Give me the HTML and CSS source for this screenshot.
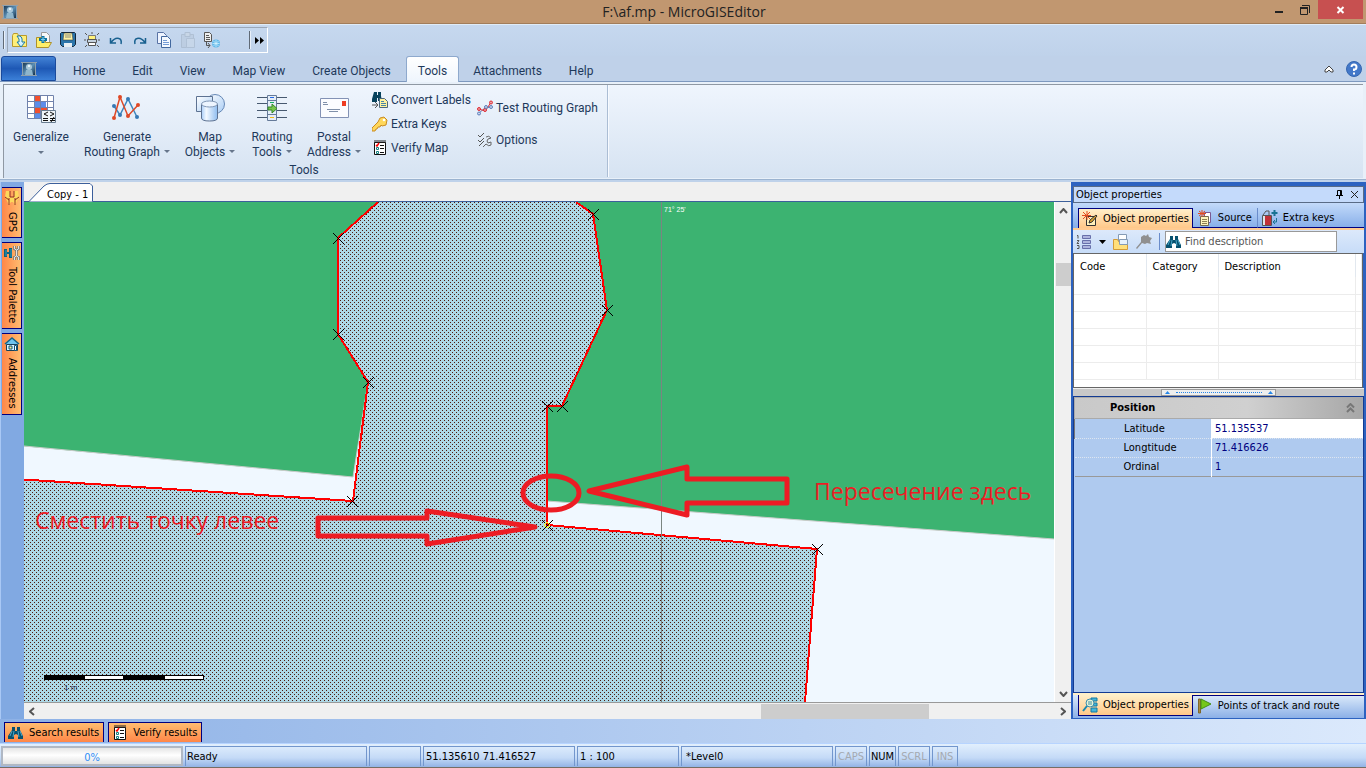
FILE: index.html
```html
<!DOCTYPE html>
<html lang="en">
<head>
<meta charset="utf-8">
<title>F:\af.mp - MicroGISEditor</title>
<link rel="stylesheet" href="styles.css">
</head>
<body>
<svg class="defs" aria-hidden="true">
  <defs>
    <linearGradient id="steel" x1="0" y1="0" x2="1" y2="1"><stop offset="0" stop-color="#1d3a55"/><stop offset=".5" stop-color="#5b8fb5"/><stop offset="1" stop-color="#16324c"/></linearGradient>
    <linearGradient id="glass" x1="0" y1="0" x2="1" y2="1"><stop offset="0" stop-color="#fff"/><stop offset="1" stop-color="#a9cdf5"/></linearGradient>
    <linearGradient id="cyl" x1="0" y1="0" x2="1" y2="0"><stop offset="0" stop-color="#a8cdf8"/><stop offset=".3" stop-color="#f4f9ff"/><stop offset="1" stop-color="#8fbdf0"/></linearGradient>
    <symbol id="app" viewBox="0 0 16 16"><path d="M0 1h16v1h-1v12h1v1H0v-1h1V2H0z" fill="#8ea0ae"/><path d="M2 2h12v12H2z" fill="url(#steel)"/><circle cx="8" cy="6" r="3" fill="#a9c8da"/><path d="M5 9h6l1 5H4z" fill="#8fb6cc"/><path d="M7 4h2v2H7z" fill="#e6f2f8"/></symbol>
    <symbol id="bino" viewBox="0 0 16 16"><path d="M4 2h3v4h2V2h3v3l3 6v3h-5v-4L8 9l-2 1v4H0v-3l4-6z" fill="#07516f"/><path d="M4 6l-2 5M6 6l-1 6M10 6l1 6M12 6l2 5" stroke="#4ba7c7" fill="none"/></symbol>
    <symbol id="check" viewBox="0 0 16 16"><path d="M2.500 2.500h11v12h-11z" fill="#fff" stroke="#111"/><path d="M3 0v3M5 0v3M7 0v3M9 0v3M11 0v3M13 0v3" stroke="#222"/><path d="M4 5l1 1 2-3" stroke="red" fill="none" stroke-width="1.500"/><path d="M4.500 7.500h2v2h-2zM4.500 11.500h2v2h-2z" fill="none" stroke="#168080"/><path d="M8 5.500h4M8 8.500h4M8 12.500h4" stroke="#111"/></symbol>
  </defs>
</svg>

<header class="titlebar">
  <svg class="i16"><use href="#app"/></svg>
  <h1 class="title">F:\af.mp - MicroGISEditor</h1>
  <div class="winbtns">
    <button class="winbtn" aria-label="Minimize"><svg width="12" height="12"><path d="M2 7h8v2H2z" fill="#222"/></svg></button>
    <button class="winbtn" aria-label="Restore"><svg width="12" height="12"><path d="M1.500 3.500h7v7h-7zM3 1.500h7.500V9" fill="none" stroke="#222"/><path d="M1 4h8" stroke="#222" stroke-width="2"/></svg></button>
    <button class="winbtn close" aria-label="Close"><svg width="12" height="12"><path d="M2.500 3l6 6M8.500 3l-6 6" stroke="#fff" stroke-width="2"/></svg></button>
  </div>
</header>

<div class="quick">
  <span class="grip"></span>
  <div class="quickbox">
    <button class="tool" aria-label="Open"><svg class="i16" viewBox="0 0 16 16"><path d="M.5 3.500l1-2h4l1 2h8v11H.5z" fill="#ffef7a" stroke="#b89a2c"/><path d="M5 4q6-1 5 6h3l-4 5-4-5h2q1-3-2-6z" fill="#d9f3ff" stroke="#1a7ca8"/></svg></button>
    <button class="tool" aria-label="Add map"><svg class="i16" viewBox="0 0 16 16"><path d="M5.500.5h5l3 3v8h-8z" fill="#f7f7f7" stroke="#999"/><path d="M.5 15.500v-10h5l1 2h3v3h6l-3 5z" fill="#ffef6a" stroke="#ad912d"/><path d="M7 4v7M3 7.500h8" stroke="#0a71a0" stroke-width="3"/><path d="M7 5v5M5 7.500h4" stroke="#7fd0ee"/></svg></button>
    <button class="tool" aria-label="Save"><svg class="i16" viewBox="0 0 16 16"><path d="M1.500.5h13l1 1v11l-2 2h-11l-2-2v-11z" fill="#2c75aa" stroke="#14283c"/><path d="M4 1h8l1 7H3z" fill="#fff4a4" stroke="#333" stroke-width=".5"/><path d="M5 3h6M5 5h6" stroke="#887"/><path d="M4 11h8v4H4z" fill="#e8eef3"/></svg></button>
    <button class="tool" aria-label="Print"><svg class="i16" viewBox="0 0 16 16"><path d="M1 1l2 2M15 1l-2 2M1 15l2-2M15 15l-2-2M8 0v2M0 8h2M14 8h2" stroke="#555"/><path d="M4.500 3.500h7v4h-7z" fill="#fff27a" stroke="#777"/><path d="M3.500 7.500h9v3h-9z" fill="#c5d2df" stroke="#555"/><path d="M4.500 10.500h7v3h-7z" fill="#fff" stroke="#555"/></svg></button>
    <button class="tool" aria-label="Undo"><svg class="i16" viewBox="0 0 16 16"><path d="M2.500 6v5H8M3 10.500Q7 5 11 6.500q3 1 2 5.500" fill="none" stroke="#18608f" stroke-width="1.500"/></svg></button>
    <button class="tool" aria-label="Redo"><svg class="i16" viewBox="0 0 16 16"><path d="M13.500 6v5H8M13 10.500Q9 5 5 6.500q-3 1-2 5.500" fill="none" stroke="#18608f" stroke-width="1.500"/></svg></button>
    <button class="tool" aria-label="Copy"><svg class="i16" viewBox="0 0 16 16"><path d="M1.500.5h6l3 3v8h-9z" fill="#eef4ff" stroke="#5973a5"/><path d="M5.500 4.500h6l3 3v8h-9z" fill="#f4f9ff" stroke="#42689f"/><path d="M7 8.500h4M7 10.500h6M7 12.500h6" stroke="#739bd5"/></svg></button>
    <button class="tool" disabled aria-label="Paste"><svg class="i16" viewBox="0 0 16 16"><path d="M1.500 2.500h12v13h-12z" fill="#b9c8da" stroke="#9cabbc"/><path d="M5 .5h5v4H5z" fill="#ccd6e1" stroke="#9cabbc"/><path d="M6.500 6.500h8v9h-8z" fill="#cbd8e7" stroke="#a0b0c2"/></svg></button>
    <button class="tool" aria-label="Transform"><svg class="i16" viewBox="0 0 16 16"><path d="M.5.500h5l2 2v7h-7z" fill="#eee" stroke="#555"/><path d="M2 3.500h3M2 5.500h4M2 7.500h4M2.500 10v3.500H6M4 11l2 2.500L4 16" stroke="#555" fill="none"/><circle cx="12" cy="11.500" r="4" fill="#64b9ea"/><path d="M12 8v7M8.500 11.500h7M9.500 9l5 5M14.500 9l-5 5" stroke="#d9f5ff" stroke-width=".7"/></svg></button>
    <span class="grip far"></span>
    <button class="more" aria-label="More commands"><svg width="9" height="7"><path d="M0 0l4 3.500L0 7zM5 0l4 3.500L5 7z"/></svg></button>
  </div>
</div>

<nav class="tabs">
  <button class="appbtn" aria-label="Application menu"><svg class="i16"><use href="#app"/></svg></button>
  <button class="tab">Home</button><button class="tab">Edit</button><button class="tab">View</button><button class="tab">Map View</button><button class="tab">Create Objects</button><button class="tab current">Tools</button><button class="tab">Attachments</button><button class="tab">Help</button>
  <div class="tabend">
    <button class="bare" aria-label="Collapse ribbon"><svg width="10" height="8"><path d="M1 5l4-4 4 4v2H7L5 5 3 7H1z" fill="#fff" stroke="#444"/></svg></button>
    <button class="bare" aria-label="Help"><svg width="16" height="16"><circle cx="8" cy="8" r="7.500" fill="#4378c9" stroke="#3566b0"/><path d="M5.500 6q0-2.500 2.500-2.500T10.500 6 8 8.500V10M8 11.500v2" fill="none" stroke="#fff" stroke-width="2"/></svg></button>
  </div>
</nav>

<section class="ribbon">
  <div class="group">
    <div class="groupbody">
      <button class="big b1"><svg width="32" height="32"><path d="M2 3h27v24H2z" fill="#fff"/><path d="M9 3h7v6H9zM9 15h7v6H9zM16 15h6v6h-6z" fill="#f1502f"/><path d="M9 9h12v6H9zM9 21h6v6H9z" fill="#5d8de9"/><path d="M2.500 3.500h26v23h-26zM9.500 3v24M15.500 3v24M22.500 3v24M2 9.500h27M2 15.500h27M2 21.500h27" fill="none" stroke="#7082ac"/><path d="M16.500 18.500h14v12h-14z" fill="#eef4f8" stroke="#687d91"/><path d="M23 20l-4 2 4 2M18 26.500h5M18 28.500h5M25 20l4 2-4 2M25 26.500h5M25 28.500h5M29 25l-3 5" fill="none" stroke="#111"/></svg><span>Generalize</span><span class="drop"></span></button>
      <button class="big b2"><svg width="32" height="32"><path d="M3 14l6 9 8-16 9 18" fill="none" stroke="#3f87be" stroke-width="1.500"/><path d="M3 26L9 5l8 19L27 13" fill="none" stroke="#df4826" stroke-width="1.500"/><g fill="#3779b5"><circle cx="3" cy="14" r="2"/><circle cx="9" cy="23" r="2"/><circle cx="17" cy="7" r="2"/><circle cx="26" cy="25" r="2"/></g><g fill="#df4826"><circle cx="3" cy="26" r="2"/><circle cx="9" cy="5" r="2"/><circle cx="17" cy="24" r="2"/><circle cx="27" cy="13" r="2"/></g></svg><span>Generate</span><span>Routing Graph <i class="drop"></i></span></button>
      <button class="big b3"><svg width="32" height="32"><circle cx="21" cy="12" r="9.500" fill="url(#glass)" stroke="#6688b6"/><path d="M2.500 4.500h16v15h-16z" fill="url(#glass)" stroke="#5d7292"/><path d="M7.500 12v14q0 3 8 3t8-3V12" fill="url(#cyl)" stroke="#5d7292"/><ellipse cx="15.500" cy="12" rx="8" ry="3" fill="#edf5ff" stroke="#8298b6"/></svg><span>Map</span><span>Objects <i class="drop"></i></span></button>
      <button class="big b4"><svg width="32" height="32"><path d="M1 5.500h30M1 11.500h30M1 18.500h30M1 25.500h30" stroke="#475970"/><path d="M11.500 3.500h9v25h-9z" fill="#e4edf8" stroke="#657a99"/><path d="M12 8.500h8M12 22.500h8" stroke="#657a99"/><path d="M14 5.500h4" stroke="#2669e7"/><path d="M14 10.500h4" stroke="#18ae69"/><path d="M14 25.500h4" stroke="#f0ba19"/><path d="M12 15h4v-3l5 4.500-5 4.500v-3h-4z" fill="#75c64b" stroke="#38852a"/></svg><span>Routing</span><span>Tools <i class="drop"></i></span></button>
      <button class="big b5"><svg width="32" height="32"><path d="M2.500 6.500h28v19h-28z" fill="#fbfcff" stroke="#8392b5"/><path d="M5 10.500h4M5 12.500h5M9 17.500h13M11 19.500h9" stroke="#8090aa"/><path d="M24 9h4v5h-4z" fill="#ee3c24"/></svg><span>Postal</span><span>Address <i class="drop"></i></span></button>
      <div class="stack first">
        <button class="small"><svg class="i16" viewBox="0 0 16 16"><path d="M2 0h3v3h1V0h3v4l1 5H6V6H5v4H0V7z" fill="#07425c"/><path d="M0 13h5M3 10l3 3-3 3" stroke="#555" fill="none"/><path d="M7.500 6.500h5l3 3v6h-8z" fill="#fff2a0" stroke="#4e687c"/><path d="M9 9.500h3M9 11.500h5M9 13.500h5" stroke="#4685a9"/></svg>Convert Labels</button>
        <button class="small"><svg class="i16" viewBox="0 0 16 16"><path d="M8 2l4-1 3 3-1 5-4 1-1-1-1 2H6l-1 2H4l-1 2H0v-3l6-6z" fill="#ffd75a" stroke="#c98c23"/><circle cx="12" cy="4" r="1.300" fill="#fff"/></svg>Extra Keys</button>
        <button class="small"><svg class="i16"><use href="#check"/></svg>Verify Map</button>
      </div>
      <div class="stack second">
        <button class="small"><svg class="i16" viewBox="0 0 16 16"><path d="M2 13l6-5 6-1" stroke="#6381b8" fill="none"/><path d="M2 9l6 2 3-4 3-5" stroke="#e02c35" fill="none"/><g fill="#e9a0a4" stroke="#e02c35"><circle cx="2" cy="9" r="1.500"/><circle cx="8" cy="10" r="1.500"/><circle cx="14" cy="2.500" r="1.500"/></g><g fill="#c6d5ee" stroke="#5f7eb9"><circle cx="2" cy="13.500" r="1.500"/><circle cx="9" cy="7" r="1.500"/><circle cx="14" cy="7" r="1.500"/></g></svg>Test Routing Graph</button>
        <button class="small"><svg class="i16" viewBox="0 0 16 16"><path d="M1 3l2 2 4-4M1 8l2 2 4-4M2 14l5-5" fill="none" stroke="#555"/><path d="M9 5q3-2 5 1l-3 1-1 2 1 2 3-1v3q-2 2-5-1l-3 3" fill="none" stroke="#666"/></svg>Options</button>
      </div>
    </div>
    <div class="caption">Tools</div>
  </div>
</section>

<main class="work">
  <aside class="side">
    <button class="vtab"><svg class="i16" viewBox="0 0 16 16"><path d="M2 1h4v6h4V1h4l1 6-2 4-2 4-2-3H7l-2 3-2-4-2-4z" fill="#fdd85c"/><path d="M6 1v6h4V1M5 8v7M11 8v7M1 7l4 3M15 7l-4 3" fill="none" stroke="#902e24"/></svg><span>GPS</span></button>
    <button class="vtab"><svg class="i16" viewBox="0 0 16 16"><path d="M0 4h3v3h2V3h3v10H5V9H3v3H0z" fill="#0c627c"/><path d="M2 5v6M7 4v8" stroke="#2e9abb"/><path d="M10.500 1v3l2 1 2-1V1M12.500 5v6M10.500 15v-3l2-1 2 1v3" fill="none" stroke="#777" stroke-width="2.500"/><path d="M10.500 1v3l2 1 2-1V1M12.500 5v6M10.500 15v-3l2-1 2 1v3" fill="none" stroke="#e0e4e5"/></svg><span>Tool Palette</span></button>
    <button class="vtab"><svg class="i16" viewBox="0 0 16 16"><path d="M2.500 8.500h11v6h-11z" fill="#d9f4ff" stroke="#174058"/><path d="M1 8l7-6 7 6" fill="#6ec4ee" stroke="#12648b" stroke-width="1.500"/><path d="M5 10h3v3H5z" fill="#ffef8a" stroke="#125478"/><path d="M10.500 9.500h2v5h-2z" fill="#fff" stroke="#125478"/></svg><span>Addresses</span></button>
  </aside>

  <section class="document">
    <div class="doctabs"><button class="doctab"><svg width="64" height="19"><path d="M0 18.500L15 3q3-2.500 6-2.500h40l2.500 2.500V18.500" fill="#fff" stroke="#3c5f9b"/></svg><span>Copy - 1</span></button></div>
    <div class="view">
      <svg class="map" role="img" aria-label="Map with selected polygon">
        <defs><pattern id="dots" width="4" height="4" patternUnits="userSpaceOnUse"><path d="M0 0h4v4H0z" fill="#add8e6"/><path d="M0 0h1v1H0zM2 2h1v1H2z" fill="#4e180c"/></pattern></defs>
        <g transform="translate(-24 -202)">
          <path d="M0 444L353 477 368 382 420 202H0z" fill="#3cb371"/>
          <path d="M547 202V501L1054 539 3000 684V202z" fill="#3cb371"/>
          <path d="M24 446L353 477 367 388M547 501L1054 539" fill="none" stroke="#c8cbc8"/>
          <path d="M378 202h198l17 12 14 96-45 96h-15v119l270 24-12 153L764 1200H24V479.500L353 501l15-119-30-48V238z" fill="url(#dots)" shape-rendering="crispEdges"/>
          <path d="M24 479.500L353 501 368 382 338 334V238L378 202M576 202L593 214 607 310 562 406H547V525L817 549 805 702" fill="none" stroke="red" stroke-width="2" shape-rendering="crispEdges"/>
          <path d="M661.500 202V2000" stroke="#7b8581"/>
          <path d="M333 233l11 11m0-11l-11 11M333 329l11 11m0-11l-11 11M363 377l11 11m0-11l-11 11M347 496l11 11m0-11l-11 11M588 209l11 11m0-11l-11 11M602 305l11 11m0-11l-11 11M557 401l11 11m0-11l-11 11M542 401l11 11m0-11l-11 11M542 520l11 11m0-11l-11 11M812 544l11 11m0-11l-11 11" stroke="#000"/>
          <path d="M544 525l3-3 3 3-3 3z" fill="none" stroke="#ff0"/>
          <g fill="none" stroke="#ed1c24" stroke-width="5" stroke-linejoin="round">
            <ellipse cx="551" cy="493" rx="28" ry="17"/>
            <path d="M589 491L687 467V479H787V503H687V515z"/>
            <path d="M535 527L427 511V518H318V536H427V544z"/>
          </g>
          <text class="note" x="35" y="529">Сместить точку левее</text>
          <text class="note" x="814" y="500">Пересечение здесь</text>
          <text class="degree" x="664" y="212">71° 25'</text>
          <path d="M44 675h160v5H44z"/><path d="M85 676h38v3H85zM165 676h38v3h-38z" fill="#fff"/>
          <text class="scale" x="64" y="690">1 m</text>
        </g>
      </svg>
      <div class="vscroll"><svg width="9" height="6"><path d="M1 5l3.500-4L8 5" class="arrow"/></svg><span class="vthumb"></span><svg class="down" width="9" height="6"><path d="M1 1l3.500 4L8 1" class="arrow"/></svg></div>
      <div class="hscroll"><svg width="6" height="9"><path d="M5 1L1 4.500 5 8" class="arrow"/></svg><span class="hthumb"></span><svg width="6" height="9"><path d="M1 1l4 3.500L1 8" class="arrow"/></svg></div>
    </div>
  </section>

  <aside class="props">
    <div class="prophead"><h2>Object properties</h2><button class="bare" aria-label="Pin"><svg width="7" height="9"><path d="M1.500.5h4v5h-4zM0 5.500h7M3.500 6v3M4.500 1v5" fill="none" stroke="#000"/></svg></button><button class="bare" aria-label="Close panel"><svg width="9" height="9"><path d="M1 1l7 7M8 1L1 8" stroke="#222"/></svg></button></div>
    <div class="ptabs">
      <button class="ptab on"><svg class="i16" viewBox="0 0 16 16"><path d="M4.500 5.500h9v9h-9z" fill="#fff1ba" stroke="#333"/><path d="M7 12l1-3 6-5 1 1-5 6z" fill="#dfa42c" stroke="#333"/><path d="M5 0v9M0 4.500h9M1 1l7 7M8 1L1 8" stroke="#e24b20"/></svg>Object properties</button>
      <button class="ptab"><svg class="i16" viewBox="0 0 16 16"><path d="M7.500 2.500h6v10h-6z" fill="#fff" stroke="#7a5a93"/><path d="M3.500 6.500h8v9h-8z" fill="#fff5bc" stroke="#746c50"/><path d="M5 9.500h5M5 11.500h5M5 13.500h5" stroke="#8e8154"/><path d="M5 0v7M1 3.500h8M2 1l6 5M8 1L2 6" stroke="#e24b20"/></svg>Source</button>
      <button class="ptab keys"><svg class="i16" viewBox="0 0 16 16"><path d="M.5 5.500h9v10h-9z" fill="#dfe4e6" stroke="#555"/><path d="M3 6h6v9H3z" fill="#c03038"/><path d="M1 5l3-4h3v4" fill="none" stroke="#555"/><path d="M12.500 0v6M9.500 3h6" stroke="#197394" stroke-width="2"/><path d="M14.500 8v4H11M13 10l-2 2 2 2" fill="none" stroke="#197394"/></svg>Extra keys</button>
    </div>
    <div class="ptools">
      <button class="bare" aria-label="Sort"><svg class="i16" viewBox="0 0 16 16"><path d="M6.500 1.500h8v3h-8zM6.500 6.500h8v3h-8zM6.500 11.500h8v3h-8z" fill="#aeb5de" stroke="#6870ab"/><path d="M1 1.500h1v3M1 6.500h2l-2 3h2M1 11.500h2v3H1" fill="none" stroke="#555"/></svg></button>
      <button class="bare" aria-label="Sort options"><svg width="7" height="4"><path d="M0 0h7L3.500 4z"/></svg></button>
      <button class="bare" aria-label="Open folder"><svg class="i16" viewBox="0 0 16 16"><path d="M5.500.5h8v9h-8z" fill="#fff" stroke="#849bb5"/><path d="M.5 5.500h4l1 2h9v8H.5z" fill="#ffdf7a" stroke="#d39b38"/><path d="M6.500 5.500h8v5h-8z" fill="#e6f1fb" stroke="#849bb5"/></svg></button>
      <button class="bare" aria-label="Settings"><svg class="i16" viewBox="0 0 16 16"><path d="M5 3l3-2 2 1 2-2 1 3 3 1-2 3 1 3-4-1-2 1-3-1-5 6-1-1 5-6z" fill="#909090"/></svg></button>
      <span class="sep"></span>
      <label class="find"><svg class="i16"><use href="#bino"/></svg><input type="text" placeholder="Find description" aria-label="Find description"></label>
    </div>
    <div class="codes">
      <table>
        <thead><tr><th class="c1">Code</th><th class="c2">Category</th><th class="c3">Description</th><th></th></tr></thead>
        <tbody><tr><td></td><td></td><td></td><td></td></tr><tr><td></td><td></td><td></td><td></td></tr><tr><td></td><td></td><td></td><td></td></tr><tr><td></td><td></td><td></td><td></td></tr><tr><td></td><td></td><td></td><td></td></tr><tr><td></td><td></td><td></td><td></td></tr></tbody>
      </table>
    </div>
    <div class="splitter"><span class="handle"><svg width="5" height="3"><path d="M0 3h5L2.500 0z" fill="#2687e8"/></svg><span class="dotline"></span><svg width="5" height="3"><path d="M0 3h5L2.500 0z" fill="#2687e8"/></svg></span></div>
    <div class="inspector">
      <div class="section"><h3>Position</h3><svg width="9" height="10"><path d="M1 4.500L4.500 1 8 4.500M1 9l3.500-3.500L8 9" fill="none" stroke="#777" stroke-width="2"/></svg></div>
      <table class="values">
        <tbody><tr class="active"><th>Latitude</th><td>51.135537</td></tr><tr><th>Longtitude</th><td>71.416626</td></tr><tr><th>Ordinal</th><td>1</td></tr></tbody>
      </table>
    </div>
    <div class="pfoot">
      <button class="ptab on"><svg class="i16" viewBox="0 0 16 16"><path d="M9 1h6v3H9zM9 6h6v3H9zM9 11h6v4H9z" fill="#42b7db" stroke="#14799f"/><circle cx="8" cy="6" r="4" fill="#e6f5d8" stroke="#398cae"/><path d="M5 9l-4 5" stroke="#1788b0" stroke-width="2"/><path d="M6 5h4M6 7h4" stroke="#3b8ba6"/></svg>Object properties</button>
      <button class="ptab"><svg class="i16" viewBox="0 0 16 16"><path d="M1.500 1h2v14h-2z" fill="#a98b42" stroke="#7e672a"/><path d="M4 1l10 5-10 5z" fill="#75c71b" stroke="#438d18"/></svg>Points of track and route</button>
    </div>
  </aside>
</main>

<div class="docked">
  <button class="hid"><svg class="i16"><use href="#bino"/></svg>Search results</button>
  <button class="hid"><svg class="i16"><use href="#check"/></svg>Verify results</button>
</div>

<footer class="status">
  <div class="progress" role="progressbar" aria-valuenow="0" aria-valuemin="0" aria-valuemax="100" aria-label="Progress">0%</div>
  <span class="cell ready">Ready</span><span class="cell blank"></span><span class="cell coords">51.135610 71.416527</span><span class="cell ratio">1 : 100</span><span class="cell level">*Level0</span>
  <span class="cell key off">CAPS</span><span class="cell key num">NUM</span><span class="cell key off">SCRL</span><span class="cell key off ins">INS</span>
</footer>
</body>
</html>
```

FILE: styles.css
```css
* { box-sizing: border-box; }

:root {
  --ui: "DejaVu Sans Condensed", Tahoma, "Noto Sans", sans-serif;
  --ribbon: Roboto, "Segoe UI", sans-serif;
  --navy: #00007f;
}

body {
  display: flex;
  flex-direction: column;
  height: 100vh;
  margin: 0;
  overflow: hidden;
  background: #bfd2ea;
  color: #000;
  font: 11px/14px var(--ui);
}

button { margin: 0; padding: 0; border: 0; background: none; color: inherit; font: inherit; text-align: left; }
h1, h2, h3 { margin: 0; font: inherit; }
svg { display: block; flex: none; }
.defs { position: absolute; width: 0; height: 0; }
.i16 { width: 16px; height: 16px; }
.bare { display: flex; align-items: center; }

/* Title bar */
.titlebar { display: grid; grid-template-columns: 1fr auto 1fr; flex: none; height: 24px; padding-left: 2px; align-items: center; background: #c19770; border-bottom: 1px solid #a27d5b; }
.title { font: 14px/20px "Open Sans", "Segoe UI", sans-serif; color: #222; }
.winbtns { display: flex; justify-content: flex-end; align-self: start; padding-right: 3px; }
.winbtn { display: flex; align-items: center; justify-content: center; width: 26px; height: 19px; }
.close { width: 45px; background: #c75050; }

/* Quick access */
.quick { display: flex; flex: none; height: 32px; padding: 2px 0 3px 3px; gap: 2px; background: linear-gradient(#c6d8ef, #bfd2ea); border-top: 1px solid #e0ecf8; }
.grip { width: 2px; height: 18px; align-self: center; border-left: 1px solid #606a76; border-right: 1px solid #e8f0fa; }
.quickbox { display: flex; align-items: center; gap: 8px; padding: 0 3px 0 4px; border: 1px solid #9aa7b8; border-right-color: #fff; border-bottom-color: #fff; }
.far { margin: 0 -4px 0 21px; }
.tool:disabled { opacity: .5; }

/* Ribbon tabs */
.tabs { display: flex; flex: none; height: 26px; font: 12px/24px var(--ribbon); color: #1e395b; background: #bfd1e9; border-bottom: 1px solid #7e99bf; }
.appbtn { display: flex; align-items: center; justify-content: center; width: 55px; margin: 0 4px 0 1px; border: 1px solid #1a4a9c; border-radius: 3px 3px 0 0; background: linear-gradient(#4383d6, #1e58b5 50%, #3b80d8); }
.tab { padding: 2px 13px 0 12px; border: 1px solid transparent; border-bottom: 0; white-space: nowrap; }
.current { margin: 0 1px -1px; border-color: #8ea9cd; border-radius: 3px 3px 0 0; background: linear-gradient(#fff, #eef5fd); padding: 2px 11px 0; }
.tabend { display: flex; align-items: center; gap: 12px; margin-left: auto; padding-right: 4px; }

/* Ribbon */
.ribbon { flex: none; height: 98px; padding: 2px 3px 1px; background: #e8f0f9; font: 12px/15px var(--ribbon); color: #1e395b; border-bottom: 1px solid #9bb3d0; }
.group { position: relative; display: flex; flex-direction: column; height: 94px; border: 1px solid #8f98a3; border-width: 1px 0 0 1px; background: linear-gradient(#eff5fd, #d6e3f2); }
.group::after { content: ""; position: absolute; left: 603px; top: 0; bottom: 1px; border-left: 1px solid #abbdd4; border-right: 1px solid #f7faff; }
.groupbody { display: flex; flex: 1; align-items: flex-start; }
.big { display: flex; flex-direction: column; align-items: center; padding-top: 7px; white-space: nowrap; }
.big svg { margin-bottom: 6px; }
.b1 { width: 74px; }
.b2 { width: 98px; }
.b3 { width: 68px; }
.b4 { width: 56px; }
.b5 { width: 68px; }
.drop { display: inline-block; width: 0; margin-left: 1px; vertical-align: 3px; border: 3px solid transparent; border-top-color: #67768b; border-bottom: 0; }
.b1 .drop { margin: 6px 0 0; }
.stack { display: flex; flex-direction: column; }
.small { display: flex; align-items: center; gap: 3px; height: 24px; white-space: nowrap; }
.first { width: 105px; padding: 3px 0 0 4px; }
.second { width: 134px; padding: 11px 0 0 4px; gap: 8px; }
.caption { width: 600px; height: 15px; text-align: center; }

/* Work area */
.work { display: flex; flex: 1; min-height: 0; margin-top: 2px; background: #81a9e2; }
.side { display: flex; flex-direction: column; gap: 4px; width: 24px; flex: none; padding: 5px 2px 0 1px; border-left: 1px solid #a9c8f5; }
.vtab { display: flex; flex-direction: column; align-items: center; gap: 6px; width: 20px; padding: 2px 0 5px; border: 1px solid var(--navy); border-left: 0; background: linear-gradient(90deg, #ff8648, #ffbd70); }
.vtab span { writing-mode: vertical-rl; }
.document { display: flex; flex: 1; flex-direction: column; min-width: 0; background: #f0f0f0; }
.doctabs { height: 20px; flex: none; padding: 1px 0 0 5px; border-bottom: 1px solid #3c5f9b; }
.doctab { display: grid; height: 19px; }
.doctab > * { grid-area: 1 / 1; }
.doctab span { z-index: 1; padding: 5px 0 0 18px; }
.view { display: grid; flex: 1; min-height: 0; grid-template: 1fr 17px / 1fr 17px; }
.map { width: 100%; height: 100%; overflow: hidden; background: #f0f8ff; }
.note { font: 23px "Open Sans", Calibri, sans-serif; fill: #ed1c24; }
.degree { font: 7px "Liberation Sans", Arial, sans-serif; fill: #fff; }
.scale { font: 8px "Liberation Sans", Arial, sans-serif; fill: #26315d; }
.vscroll { display: flex; flex-direction: column; align-items: center; padding: 6px 0 5px; border-left: 1px solid #fff; }
.vthumb { width: 15px; height: 23px; margin-top: 49px; background: #cdcdcd; }
.down { margin-top: auto; }
.hscroll { display: flex; align-items: center; grid-column: 1 / 3; padding: 1px 5px 0; border-top: 1px solid #999; }
.hthumb { flex: none; width: 168px; height: 15px; margin-left: 70%; margin-right: auto; background: #cdcdcd; }
.arrow { fill: none; stroke: #555; stroke-width: 2; }

/* Properties panel */
.props { display: flex; flex-direction: column; flex: none; width: 295px; padding: 4px 2px 1px; background: #2c62c0; }
.prophead { display: flex; align-items: center; gap: 7px; height: 17px; flex: none; padding: 0 4px 0 2px; border: 1px solid #596b86; background: #c4dafb; }
.prophead h2 { flex: 1; }
.ptabs { display: flex; flex: none; height: 27px; padding: 5px 0 0 5px; border-bottom: 2px solid #ffcb91; background: linear-gradient(#c3dafa, #86aee8); }
.ptab { display: flex; align-items: center; gap: 5px; padding: 0 5px 0 4px; white-space: nowrap; }
.ptab.on { padding: 0 3px; border: 1px solid var(--navy); background: linear-gradient(#ffefc9, #ffc889); }
.ptabs .ptab { border-bottom: 1px solid var(--navy); }
.ptabs .on { border-bottom: 0; }
.ptabs .keys { flex: 1; border-left: 1px solid #6a8ccb; }
.ptools { display: flex; align-items: center; flex: none; height: 23px; padding: 0 2px 0 3px; gap: 7px; background: linear-gradient(#dce9fb, #c7dcf8); }
.sep { width: 1px; height: 17px; background: #6a8ccb; }
.find { display: flex; align-items: center; width: 172px; height: 21px; margin-left: -2px; border: 1px solid #999; background: #fff; }
.find input { flex: 1; min-width: 0; padding: 0 3px; border: 0; outline: 0; background: none; font: inherit; }
.find input::placeholder { color: #555; opacity: 1; }
.codes { flex: none; height: 135px; margin-right: 1px; overflow: hidden; border: 1px solid #666; background: #fff; }
table { width: 100%; border-collapse: collapse; table-layout: fixed; }
.codes th { height: 23px; padding: 2px 6px 0; border-right: 1px solid #e2e8ef; text-align: left; font-weight: normal; }
.codes td { height: 17px; padding: 0; border: solid #ececec; border-width: 0 1px 1px 0; }
.c1, .c2 { width: 72px; }
.c3 { width: 137px; }
.splitter { display: flex; justify-content: center; flex: none; height: 8px; background: #c8c8c8; border-top: 1px solid #eee; }
.handle { display: flex; align-items: center; justify-content: center; gap: 6px; width: 115px; border: 1px solid #999; background: #eee; }
.dotline { width: 86px; border-top: 1px dotted #2687e8; }
.inspector { flex: 1; min-height: 0; border: 1px solid #133b92; background: #afcaef; }
.section { display: flex; align-items: center; justify-content: space-between; height: 22px; padding: 0 7px 0 35px; border: 1px solid #aaa; background: linear-gradient(90deg, #c9c9c9, #d0d0d0 60%, #a7a7a7); }
.section h3 { font-weight: bold; }
.values th { width: 137px; height: 19px; padding: 1px 0 0 49px; text-align: left; font-weight: normal; }
.values td { padding: 1px 3px 0; color: var(--navy); border-left: 1px solid #fff; }
.values tr { border-bottom: 1px dotted #dde5f0; }
.values tr:last-child { border-bottom: 1px solid #999; }
.active td { background: #fff; }
.active th { border-left: 1px solid #777; }
.pfoot { display: flex; flex: none; height: 25px; padding: 0 0 2px 5px; border-top: 2px solid #fff0c8; background: linear-gradient(#dceafa, #8bb0e7); }
.pfoot .ptab { border-top: 1px solid var(--navy); }
.pfoot .on { border-top: 0; }
.pfoot .ptab:last-child { flex: 1; }

/* Hidden panes and status */
.docked { display: flex; flex: none; height: 24px; gap: 4px; padding: 3px 0 1px 4px; background: linear-gradient(90deg, #8db1e6, #dbe9fc); }
.hid { display: flex; align-items: center; gap: 5px; padding: 0 4px 0 3px; border: 1px solid var(--navy); border-bottom: 0; background: linear-gradient(#ffbd70, #ff8648); }
.status { display: flex; flex: none; height: 25px; gap: 2px; padding: 2px 1px 1px; border-top: 1px solid #b7d4ff; border-bottom: 1px solid #776d64; background: linear-gradient(#e2effd, #c4daf7 60%, #93b3e5); }
.progress { flex: none; width: 182px; border: 2px solid #b0b8c4; background: linear-gradient(#e5e5e5, #fff 45%, #e2e2e2); color: #2e8df5; line-height: 19px; text-align: center; }
.cell { flex: none; padding: 3px 1px; border: 1px solid #7296cd; border-width: 1px 1px 0; white-space: nowrap; }
.ready { width: 182px; }
.blank { width: 52px; }
.coords { width: 152px; padding-left: 2px; }
.ratio { width: 102px; padding-left: 2px; }
.level { width: 152px; padding-left: 4px; }
.key { padding: 3px 2px; }
.num { padding: 3px 1px; }
.ins { padding: 3px 4px; }
.off { color: #a4a9b0; }
```
